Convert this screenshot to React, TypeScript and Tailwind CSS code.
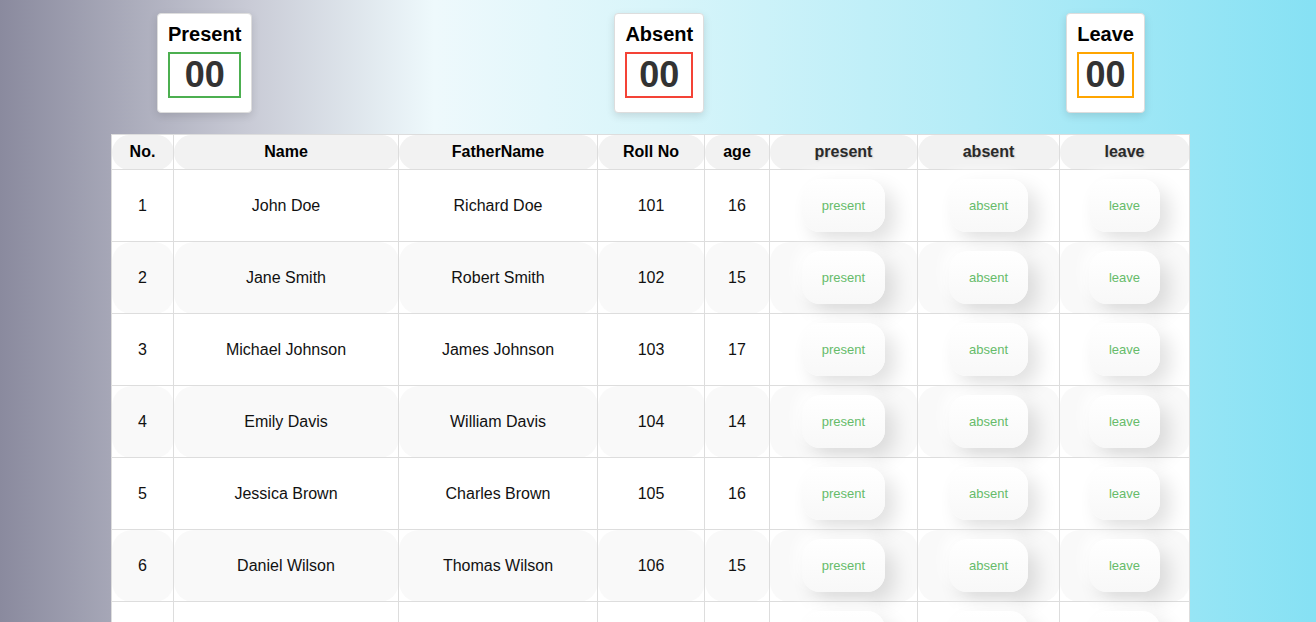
import React from 'react';

const students = [
  { id: 1, name: 'John Doe', father: 'Richard Doe', roll: 101, age: 16 },
  { id: 2, name: 'Jane Smith', father: 'Robert Smith', roll: 102, age: 15 },
  { id: 3, name: 'Michael Johnson', father: 'James Johnson', roll: 103, age: 17 },
  { id: 4, name: 'Emily Davis', father: 'William Davis', roll: 104, age: 14 },
  { id: 5, name: 'Jessica Brown', father: 'Charles Brown', roll: 105, age: 16 },
  { id: 6, name: 'Daniel Wilson', father: 'Thomas Wilson', roll: 106, age: 15 },
  { id: 7, name: 'Olivia Taylor', father: 'George Taylor', roll: 107, age: 17 },
  { id: 8, name: 'Matthew Moore', father: 'Henry Moore', roll: 108, age: 14 },
];

const counters = [
  { label: 'Present', border: 'border-[#4caf50]' },
  { label: 'Absent', border: 'border-[#f44336]' },
  { label: 'Leave', border: 'border-[#ffa500]' },
];

const colWidths = ['w-[62px]', 'w-[225px]', 'w-[199px]', 'w-[107px]', 'w-[65px]', 'w-[148px]', 'w-[142px]', 'w-[130px]'];

function StatusButton({ label }: { label: string }) {
  return (
    <button className="h-[53px] px-[20px] rounded-[18px] bg-gradient-to-b from-white to-[#f8f8f8] text-[13px] leading-[15px] text-[#66bb6a] shadow-[10px_10px_20px_rgba(0,0,0,0.12),-6px_-6px_14px_rgba(255,255,255,0.9)]">
      {label}
    </button>
  );
}

export default function App() {
  return (
    <div className="min-h-screen bg-[linear-gradient(to_right,#8a8a9e_0%,#c9cbd6_19%,#eef9fc_33%,#d8f5fa_50%,#b4ecf7_74%,#86e1f4_100%)] font-['Liberation_Sans',Arial,sans-serif] pb-10">
      {/* Counter cards */}
      <div className="flex items-start pt-[13px] pl-[157px] gap-[362px]">
        {counters.map((c) => (
          <div
            key={c.label}
            className="bg-white border border-[#ddd] rounded-[4px] pt-[9px] px-[10px] pb-[14px] shadow-[0_3px_8px_rgba(0,0,0,0.12)]"
          >
            <h2 className="text-[20px] leading-[23px] font-bold text-black text-center">{c.label}</h2>
            <div className={`mt-[6px] border-2 ${c.border} text-center text-[36px] leading-[42px] font-bold text-[#333]`}>
              00
            </div>
          </div>
        ))}
      </div>

      {/* Attendance table */}
      <table className="mt-[21px] ml-[111px] w-[1078px] table-fixed border-collapse border border-[#ddd] bg-white">
        <colgroup>
          {colWidths.map((w, i) => (
            <col key={i} className={w} />
          ))}
        </colgroup>
        <thead>
          <tr>
            {['No.', 'Name', 'FatherName', 'Roll No', 'age'].map((h) => (
              <th key={h} className="border border-[#ddd] bg-[#f2f2f2] rounded-[20px] py-2 text-[16px] leading-[18px] font-bold text-black">
                {h}
              </th>
            ))}
            {['present', 'absent', 'leave'].map((h) => (
              <th
                key={h}
                className="border border-[#ddd] bg-[#f2f2f2] rounded-[20px] py-2 text-[16px] leading-[18px] font-bold text-[#2a2a2a] [text-shadow:1px_1px_2px_rgba(0,0,0,0.15)]"
              >
                {h}
              </th>
            ))}
          </tr>
        </thead>
        <tbody>
          {students.map((s, idx) => {
            const cell = `border border-[#ddd] rounded-[20px] py-[9px] text-center text-[16px] leading-[18px] text-[#111] ${
              idx % 2 === 1 ? 'bg-[#f9f9f9]' : 'bg-white'
            }`;
            return (
              <tr key={s.id}>
                <td className={cell}>{s.id}</td>
                <td className={cell}>{s.name}</td>
                <td className={cell}>{s.father}</td>
                <td className={cell}>{s.roll}</td>
                <td className={cell}>{s.age}</td>
                <td className={cell}>
                  <StatusButton label="present" />
                </td>
                <td className={cell}>
                  <StatusButton label="absent" />
                </td>
                <td className={cell}>
                  <StatusButton label="leave" />
                </td>
              </tr>
            );
          })}
        </tbody>
      </table>
    </div>
  );
}
